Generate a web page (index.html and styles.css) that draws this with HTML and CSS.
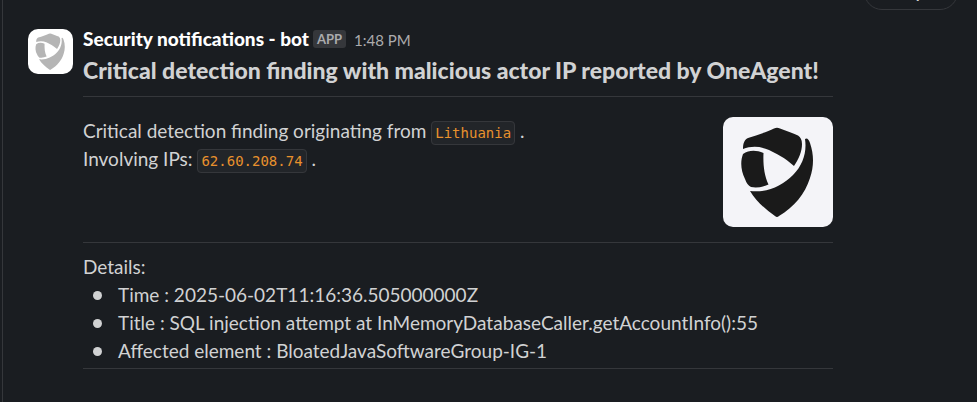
FILE: index.html
```html
<!DOCTYPE html>
<html lang="en">
<head>
<meta charset="utf-8">
<title>Security notifications</title>
<link rel="stylesheet" href="styles.css">
</head>
<body>
<svg class="defs" width="0" height="0" aria-hidden="true">
  <symbol id="shield" viewBox="0 0 110 110">
    <path d="M20 32C20 27 21 23 25 21C34 18 44 15 51 11.500Q54 10 57 11.500C63 14 70 16 75 18.500Q79 21 79 27C79 34 76 42 71 49C61 40 54 37 46 33C37 29 28 29 20 32Z"/>
    <path d="M20 37C26 33 33 33 40.500 36C40 47 41 58 45.500 67.500C40 70 34 71 28 70Q24 68 22 62C18 54 17 45 20 37Z"/>
    <path d="M82 22Q85 20 87 26C91 38 91 49 87 61C82 77 71 90 56 99Q54 101 52 99C42 92 33 84 27 74C44 76 59 69 70 58C80 48 84 35 82 22Z"/>
  </symbol>
</svg>
<main class="pane">
  <button class="jump" type="button">Today</button>
  <article class="message">
    <div class="avatar"><svg class="shield"><use href="#shield"/></svg></div>
    <div class="content">
      <header class="meta">
        <a class="sender" href="#">Security notifications - bot</a>
        <span class="badge">APP</span>
        <time class="time">1:48 PM</time>
      </header>
      <h1 class="title">Critical detection finding with malicious actor IP reported by OneAgent!</h1>
      <section class="block summary">
        <p>Critical detection finding originating from <code>Lithuania</code> .<br>Involving IPs: <code>62.60.208.74</code> .</p>
        <div class="thumb"><svg class="shield"><use href="#shield"/></svg></div>
      </section>
      <section class="block details">
        <p>Details:</p>
        <ul>
          <li>Time : 2025-06-02T11:16:36.505000000Z</li>
          <li>Title : SQL injection attempt at InMemoryDatabaseCaller.getAccountInfo():55</li>
          <li>Affected element : BloatedJavaSoftwareGroup-IG-1</li>
        </ul>
      </section>
    </div>
  </article>
</main>
</body>
</html>
```
FILE: styles.css
```css
* { box-sizing: border-box; }
body {
  margin: 0;
  background: #1a1d21;
  color: #d1d2d3;
  font: 19px/28px Lato, "Noto Sans", sans-serif;
}
p, h1, ul { margin: 0; padding: 0; }
.defs { position: absolute; }
.pane {
  position: relative;
  min-height: 100vh;
  margin-left: 2px;
  padding: 28px 24px;
  border-left: 1px solid #35373b;
  overflow: hidden;
}
.jump {
  position: absolute;
  top: -26px;
  right: 19px;
  width: 94px;
  height: 36px;
  padding: 0 34px 0 16px;
  border: 1px solid #35373b;
  border-radius: 18px;
  background: #1a1d21;
  color: #d1d2d3;
  font: 700 16px/28px Lato, sans-serif;
}
.message { display: flex; align-items: flex-start; gap: 10px; }
.avatar, .thumb { flex: none; border-radius: 10px; }
.avatar { width: 45px; height: 45px; margin: 1px 0 0 1px; background: #fff; }
.thumb { width: 110px; height: 110px; background: #f4f4f8; }
.shield { display: block; width: 100%; height: 100%; fill: #1a1a1a; }
.avatar .shield { fill: #b5b5b5; }
.content { flex: 1; min-width: 0; max-width: 750px; }
.meta { display: flex; align-items: center; line-height: 20px; }
.sender { color: #fff; font-weight: 900; text-decoration: none; }
.badge {
  margin-left: 4px;
  padding: 0 4px;
  border-radius: 3px;
  background: #35373b;
  color: #ababad;
  font-size: 13px;
  font-weight: 700;
  line-height: 18px;
}
.time { margin-left: 8px; padding-top: 2px; color: #ababad; font-size: 15px; }
.title { padding: 5px 0 10px; font-size: 23px; font-weight: 900; line-height: 31px; }
.block { border-top: 1px solid #35373b; }
.summary { display: flex; justify-content: space-between; gap: 20px; padding: 20px 0 15px; }
code {
  padding: 3px;
  border: 1px solid #35373b;
  border-radius: 4px;
  background: #222529;
  color: #e8912d;
  font: 14px/20px "DejaVu Sans Mono", monospace;
}
.details { padding: 10px 0 3px; border-bottom: 1px solid #35373b; }
ul { list-style: none; }
li { display: flex; align-items: center; gap: 16px; padding-left: 10px; }
li::before { content: ""; width: 9px; height: 9px; border-radius: 50%; background: #d1d2d3; }
```
